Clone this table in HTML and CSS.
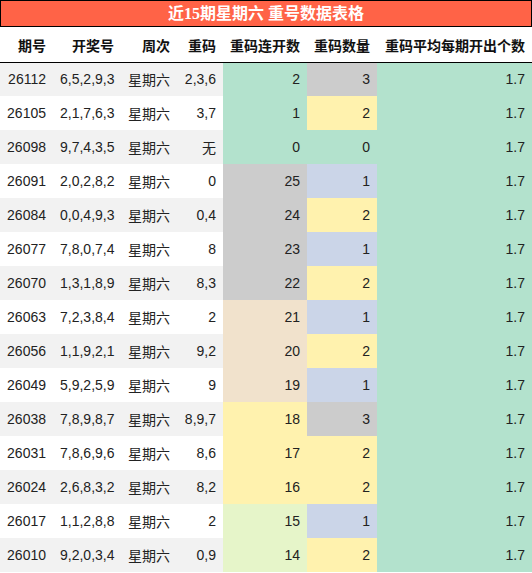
FILE: index.html
```html
<!DOCTYPE html>
<html lang="zh">
<head>
<meta charset="utf-8">
<title>近15期星期六 重号数据表格</title>
<link rel="stylesheet" href="styles.css">
</head>
<body>
<div class="title">近15期星期六 重号数据表格</div>
<table class="grid">
  <colgroup>
    <col class="c1"><col class="c2"><col class="c3"><col class="c4"><col class="c5"><col class="c6"><col class="c7">
  </colgroup>
  <thead>
    <tr><th>期号</th><th>开奖号</th><th>周次</th><th>重码</th><th>重码连开数</th><th>重码数量</th><th>重码平均每期开出个数</th></tr>
  </thead>
  <tbody>
    <tr class="odd"><td>26112</td><td>6,5,2,9,3</td><td>星期六</td><td>2,3,6</td><td class="green">2</td><td class="grey">3</td><td class="green">1.7</td></tr>
    <tr><td>26105</td><td>2,1,7,6,3</td><td>星期六</td><td>3,7</td><td class="green">1</td><td class="yellow">2</td><td class="green">1.7</td></tr>
    <tr class="odd"><td>26098</td><td>9,7,4,3,5</td><td>星期六</td><td>无</td><td class="green">0</td><td class="green">0</td><td class="green">1.7</td></tr>
    <tr><td>26091</td><td>2,0,2,8,2</td><td>星期六</td><td>0</td><td class="grey">25</td><td class="blue">1</td><td class="green">1.7</td></tr>
    <tr class="odd"><td>26084</td><td>0,0,4,9,3</td><td>星期六</td><td>0,4</td><td class="grey">24</td><td class="yellow">2</td><td class="green">1.7</td></tr>
    <tr><td>26077</td><td>7,8,0,7,4</td><td>星期六</td><td>8</td><td class="grey">23</td><td class="blue">1</td><td class="green">1.7</td></tr>
    <tr class="odd"><td>26070</td><td>1,3,1,8,9</td><td>星期六</td><td>8,3</td><td class="grey">22</td><td class="yellow">2</td><td class="green">1.7</td></tr>
    <tr><td>26063</td><td>7,2,3,8,4</td><td>星期六</td><td>2</td><td class="beige">21</td><td class="blue">1</td><td class="green">1.7</td></tr>
    <tr class="odd"><td>26056</td><td>1,1,9,2,1</td><td>星期六</td><td>9,2</td><td class="beige">20</td><td class="yellow">2</td><td class="green">1.7</td></tr>
    <tr><td>26049</td><td>5,9,2,5,9</td><td>星期六</td><td>9</td><td class="beige">19</td><td class="blue">1</td><td class="green">1.7</td></tr>
    <tr class="odd"><td>26038</td><td>7,8,9,8,7</td><td>星期六</td><td>8,9,7</td><td class="yellow">18</td><td class="grey">3</td><td class="green">1.7</td></tr>
    <tr><td>26031</td><td>7,8,6,9,6</td><td>星期六</td><td>8,6</td><td class="yellow">17</td><td class="yellow">2</td><td class="green">1.7</td></tr>
    <tr class="odd"><td>26024</td><td>2,6,8,3,2</td><td>星期六</td><td>8,2</td><td class="yellow">16</td><td class="yellow">2</td><td class="green">1.7</td></tr>
    <tr><td>26017</td><td>1,1,2,8,8</td><td>星期六</td><td>2</td><td class="lime">15</td><td class="blue">1</td><td class="green">1.7</td></tr>
    <tr class="odd"><td>26010</td><td>9,2,0,3,4</td><td>星期六</td><td>0,9</td><td class="lime">14</td><td class="yellow">2</td><td class="green">1.7</td></tr>
  </tbody>
</table>
</body>
</html>
```
FILE: styles.css
```css
html, body {
  margin: 0;
  padding: 0;
  background: #fff;
}
body {
  width: 532px;
  font-family: "Liberation Sans", "Noto Sans CJK SC", sans-serif;
  color: #222;
}
.title {
  height: 25px;
  line-height: 25px;
  border: 1px solid #000;
  background: #ff6347;
  color: #fff;
  font-family: "Liberation Serif", "Noto Sans CJK SC", serif;
  font-weight: bold;
  font-size: 16px;
  text-align: center;
  white-space: pre;
}
.grid {
  width: 532px;
  table-layout: fixed;
  border-collapse: collapse;
  border-spacing: 0;
  font-size: 14px;
}
.c1 { width: 53px; }
.c2 { width: 68px; }
.c3 { width: 56px; }
.c4 { width: 46px; }
.c5 { width: 84px; }
.c6 { width: 70px; }
.c7 { width: 155px; }
.grid th {
  height: 35px;
  padding: 2px 7px 0 7px;
  box-sizing: border-box;
  text-align: right;
  font-weight: bold;
  color: #111;
  font-family: "Noto Sans CJK SC", sans-serif;
  border-bottom: 1px solid #000;
  white-space: nowrap;
}
.grid td {
  height: 34px;
  padding: 0 7px;
  box-sizing: border-box;
  text-align: right;
  white-space: nowrap;
}
.grid tr.odd { background: #f2f2f2; }
.grid td.green { background: #b3e2cd; }
.grid td.grey { background: #cccccc; }
.grid td.yellow { background: #fff2ae; }
.grid td.blue { background: #cbd5e8; }
.grid td.beige { background: #f1e2cc; }
.grid td.lime { background: #e6f5c9; }
```
